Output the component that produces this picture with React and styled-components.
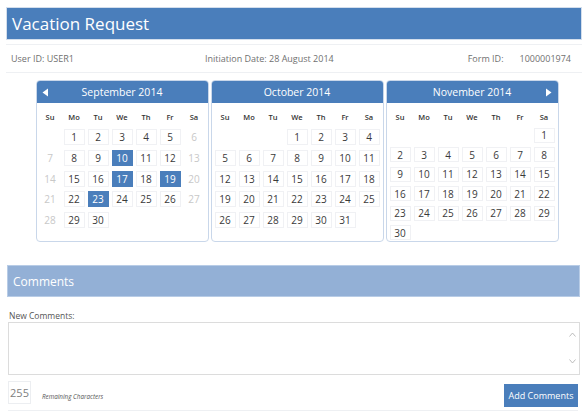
import React from "react";
import styled, { createGlobalStyle } from "styled-components";

const Global = createGlobalStyle`
  html, body { margin: 0; padding: 0; background: #fff; }
  body { font-family: "Open Sans", "Liberation Sans", sans-serif; }
  * { box-sizing: border-box; }
`;

const Page = styled.div`
  width: 585px;
  height: 414px;
  padding: 7px 3px 0 6px;
  overflow: hidden;
`;

const TitleBar = styled.div`
  height: 33px;
  background: #4a7ebb;
  border: 1px solid #d3deec;
  display: flex;
  align-items: center;
  padding-left: 5px;
  color: #fff;
  font-size: 17px;
`;

const InfoRow = styled.div`
  margin-top: 4px;
  height: 29px;
  border-top: 1px solid #eef0f3;
  border-bottom: 1px solid #eef0f3;
  display: flex;
  align-items: center;
  padding: 0 11px 0 5px;
  font-size: 9px;
  color: #707070;
`;

const InfoItem = styled.span`
  flex: ${(p) => (p.$grow ? 1 : "none")};
  width: ${(p) => (p.$w ? `${p.$w}px` : "auto")};
  margin-left: ${(p) => p.$ml || 0}px;
  white-space: pre;
`;

const Calendars = styled.div`
  margin-top: 7px;
  display: flex;
  justify-content: center;
  gap: 2px;
  padding-left: 6px;
`;

const Month = styled.div`
  width: 173px;
  height: 162px;
  border: 1px solid #c9d7ea;
  border-radius: 4px;
  overflow: hidden;
  display: flex;
  flex-direction: column;
`;

const MonthHead = styled.div`
  height: 22px;
  flex: none;
  background: #4a7ebb;
  color: #fff;
  font-size: 10.5px;
  display: flex;
  align-items: center;
  justify-content: space-between;
  padding: 0 5px;
`;

const Arrow = styled.span`
  width: 8px;
  display: flex;
  justify-content: center;
  visibility: ${(p) => (p.$hidden ? "hidden" : "visible")};
`;

const Dow = styled.div`
  display: grid;
  grid-template-columns: repeat(7, 21px);
  column-gap: 3px;
  padding: 6px 3px 0 3px;
  height: 22px;
  font-size: 7.5px;
  font-weight: 600;
  color: #333;
  text-align: center;
  align-items: center;
`;

const Grid = styled.div`
  display: grid;
  grid-template-columns: repeat(7, 21px);
  grid-auto-rows: ${(p) => p.$rowH}px;
  column-gap: 3px;
  row-gap: ${(p) => p.$gap}px;
  padding: ${(p) => p.$top}px 3px 0 3px;
`;

const Cell = styled.div`
  display: flex;
  align-items: center;
  justify-content: center;
  font-size: 10px;
  font-weight: 500;
  border: 1px solid ${(p) => (p.$sel ? "#4a7ebb" : p.$off || p.$empty ? "transparent" : "#f0f1f4")};
  background: ${(p) => (p.$sel ? "#4a7ebb" : "transparent")};
  color: ${(p) => (p.$sel ? "#fff" : p.$off ? "#c8c8c8" : "#3a3a3a")};
`;

const CommentsBar = styled.div`
  margin-top: 23px;
  margin-left: 1px;
  margin-right: 2px;
  height: 32px;
  background: #93b0d6;
  border: 1px solid #b8cce6;
  display: flex;
  align-items: center;
  padding-left: 5px;
  color: #fff;
  font-size: 12px;
`;

const Label = styled.div`
  margin-top: 13px;
  padding-left: 3px;
  font-size: 8.5px;
  color: #555;
  height: 11px;
  line-height: 11px;
`;

const TextBox = styled.div`
  margin-top: 1px;
  margin-left: 2px;
  margin-right: 2px;
  height: 53px;
  border: 1px solid #dcdcdc;
  display: flex;
`;

const Area = styled.textarea`
  flex: 1;
  border: none;
  outline: none;
  resize: none;
  overflow: hidden;
  font-family: inherit;
`;

const ScrollCol = styled.div`
  width: 13px;
  display: flex;
  flex-direction: column;
  justify-content: space-between;
  align-items: center;
  padding: 9px 0 10px;
`;

const Footer = styled.div`
  margin-top: 6px;
  margin-left: 2px;
  margin-right: 4px;
  height: 30px;
  border-bottom: 1px solid #eef0f3;
  display: flex;
  align-items: flex-start;
`;

const Count = styled.div`
  width: 23px;
  height: 23px;
  border: 1px solid #eceef1;
  display: flex;
  align-items: center;
  justify-content: center;
  font-size: 11px;
  color: #808080;
`;

const Remaining = styled.div`
  margin-left: 11px;
  margin-top: 11px;
  font-size: 6.3px;
  font-style: italic;
  color: #555;
  flex: 1;
`;

const Button = styled.button`
  margin-top: 3px;
  width: 74px;
  height: 23px;
  border: none;
  background: #4a7ebb;
  color: #fff;
  font-family: inherit;
  font-size: 9px;
  padding: 0;
`;

const Tri = ({ dir }) => (
  <svg width="7" height="9" viewBox="0 0 7 9">
    {dir === "left" ? <path d="M6 0.5 L0.5 4.5 L6 8.5 Z" fill="#fff" /> : <path d="M1 0.5 L6.5 4.5 L1 8.5 Z" fill="#fff" />}
  </svg>
);

const Chev = ({ up }) => (
  <svg width="7" height="5" viewBox="0 0 7 5">
    <path d={up ? "M0.5 4.5 L3.5 1 L6.5 4.5" : "M0.5 0.5 L3.5 4 L6.5 0.5"} fill="none" stroke="#b5b5b5" strokeWidth="0.9" />
  </svg>
);

const DOW = ["Su", "Mo", "Tu", "We", "Th", "Fr", "Sa"];

const months = [
  { name: "September 2014", start: 1, days: 30, prev: true, next: false, offWeekend: true, selected: [10, 17, 19, 23] },
  { name: "October 2014", start: 3, days: 31, prev: false, next: false, offWeekend: false, selected: [] },
  { name: "November 2014", start: 6, days: 30, prev: false, next: true, offWeekend: false, selected: [] },
];

function MonthCal({ m }) {
  const cells = [];
  for (let i = 0; i < m.start; i++) cells.push(null);
  for (let d = 1; d <= m.days; d++) cells.push(d);
  const rows = Math.ceil(cells.length / 7);
  const six = rows === 6;
  return (
    <Month>
      <MonthHead>
        <Arrow $hidden={!m.prev}><Tri dir="left" /></Arrow>
        <span>{m.name}</span>
        <Arrow $hidden={!m.next}><Tri dir="right" /></Arrow>
      </MonthHead>
      <Dow>
        {DOW.map((d) => (
          <span key={d}>{d}</span>
        ))}
      </Dow>
      <Grid $rowH={six ? 15 : 16} $gap={six ? 4.6 : 4.75} $top={six ? 2.5 : 4}>
        {cells.map((d, i) => {
          if (d === null) return <Cell key={i} $empty />;
          const col = i % 7;
          const off = m.offWeekend && (col === 0 || col === 6);
          const sel = m.selected.includes(d);
          return (
            <Cell key={i} $off={off} $sel={sel}>
              {d}
            </Cell>
          );
        })}
      </Grid>
    </Month>
  );
}

export default function App() {
  return (
    <>
      <Global />
      <Page>
        <TitleBar>Vacation Request</TitleBar>
        <InfoRow>
          <InfoItem $w={194}>User ID: USER1</InfoItem>
          <InfoItem $grow>Initiation Date: 28 August 2014</InfoItem>
          <InfoItem>Form ID:</InfoItem>
          <InfoItem $ml={16}>1000001974</InfoItem>
        </InfoRow>
        <Calendars>
          {months.map((m) => (
            <MonthCal key={m.name} m={m} />
          ))}
        </Calendars>
        <CommentsBar>Comments</CommentsBar>
        <Label>New Comments:</Label>
        <TextBox>
          <Area />
          <ScrollCol>
            <Chev up />
            <Chev />
          </ScrollCol>
        </TextBox>
        <Footer>
          <Count>255</Count>
          <Remaining>Remaining Characters</Remaining>
          <Button>Add Comments</Button>
        </Footer>
      </Page>
    </>
  );
}
